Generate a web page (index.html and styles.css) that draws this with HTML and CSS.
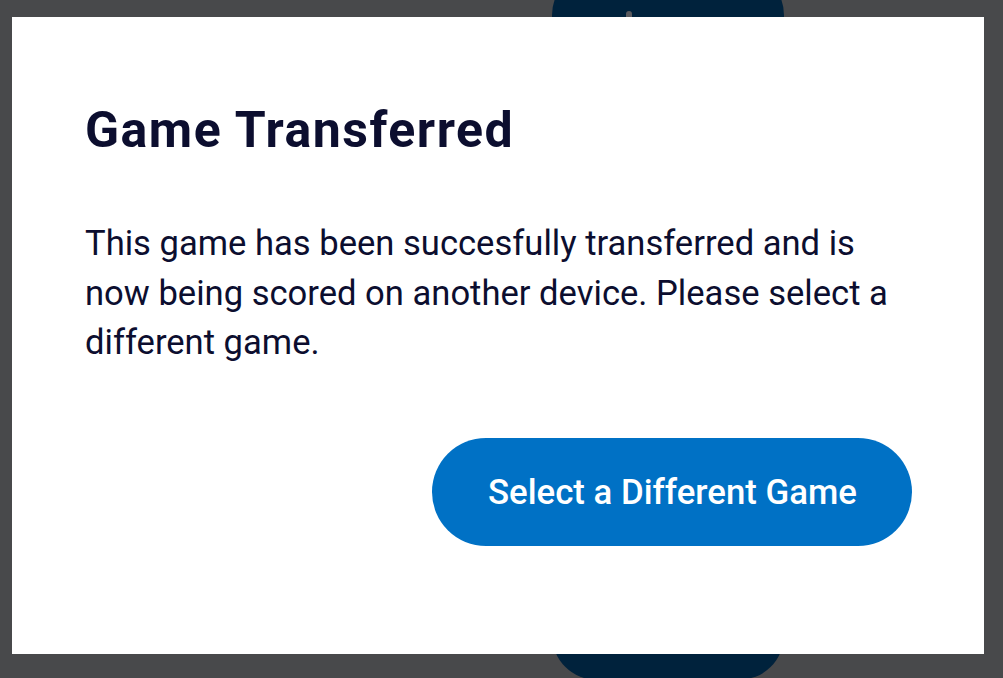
FILE: index.html
```html
<!DOCTYPE html>
<html lang="en">
  <head>
    <meta charset="UTF-8" />
    <meta name="viewport" content="width=device-width, initial-scale=1.0" />
    <title>Game Transferred</title>
    <link rel="stylesheet" href="styles.css">
  </head>
  <body>
    <div class="backdrop-card"><span class="backdrop-nub"></span></div>
    <div class="overlay">
      <div class="modal" role="dialog" aria-labelledby="modal-title">
        <h1 id="modal-title" class="modal-title">Game Transferred</h1>
        <p class="modal-text">
          This game has been succesfully transferred and is now being scored on
          another device. Please select a different game.
        </p>
        <div class="modal-actions">
          <button type="button" class="btn-primary">Select a Different Game</button>
        </div>
      </div>
    </div>
  </body>
</html>
```

FILE: styles.css
```css
html,
body {
  height: 100%;
}
body {
  margin: 0;
  background-color: #48494b;
  font-family: Roboto, "Liberation Sans", Arial, sans-serif;
  overflow: hidden;
}
.backdrop-card {
  position: absolute;
  left: 552px;
  top: -30px;
  width: 232px;
  height: 710px;
  border-radius: 45px;
  background-color: #00223c;
}
.backdrop-nub {
  position: absolute;
  left: 74px;
  top: 41px;
  width: 6px;
  height: 10px;
  border-radius: 3px;
  background-color: #5a5a5e;
}
.overlay {
  position: relative;
  display: flex;
  align-items: flex-start;
  padding: 17px 19px 0 12px;
}
.modal {
  flex: 1;
  background-color: #fff;
  padding: 83px 72px 108px 73px;
}
.modal-title {
  margin: 0;
  font-size: 50px;
  line-height: 60px;
  font-weight: 700;
  letter-spacing: 1.5px;
  color: #0c0e2f;
}
.modal-text {
  margin: 59px 0 0;
  font-size: 34.6px;
  line-height: 49.5px;
  color: #0c0e2f;
}
.modal-actions {
  display: flex;
  justify-content: flex-end;
  margin-top: 70px;
}
.btn-primary {
  height: 108px;
  padding: 0 55px 0 56px;
  border: none;
  border-radius: 54px;
  background-color: #0071c5;
  color: #fff;
  font-family: inherit;
  font-size: 34.8px;
  font-weight: 500;
  cursor: pointer;
}
```
